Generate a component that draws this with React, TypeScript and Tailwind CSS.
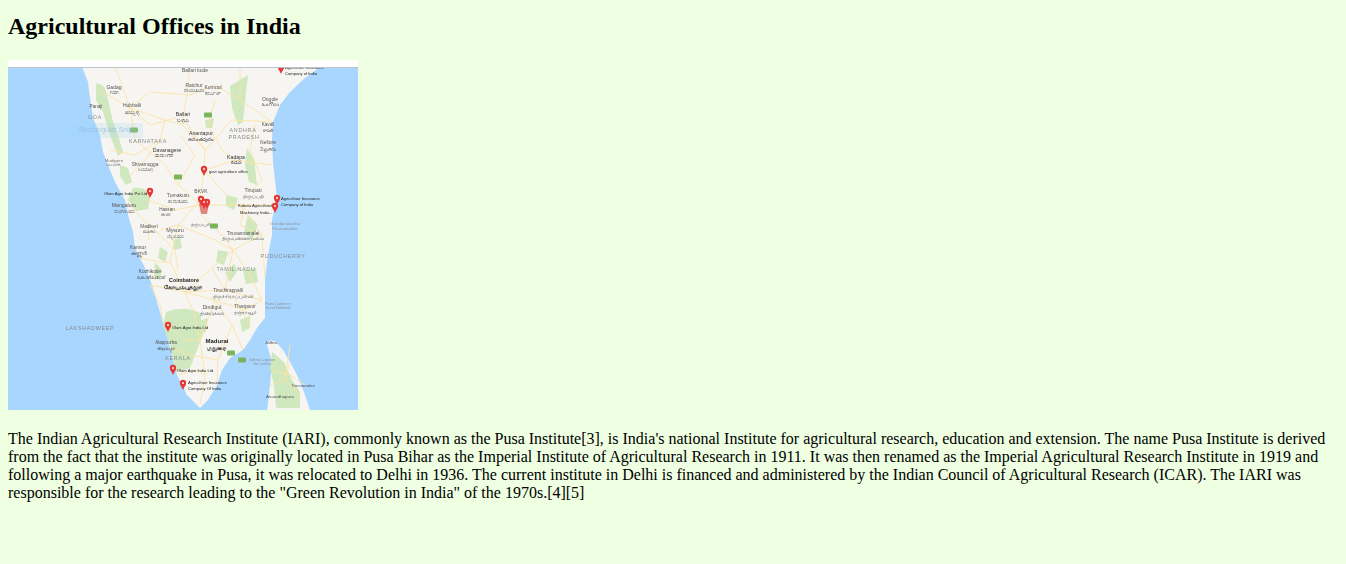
const roads = [
  "M115 67 L122 85 L130 108 L150 125 L176 118 L205 150 L204 170 L200 200 L178 225 L170 262 L185 292 L215 300 L232 325 L243 350",
  "M190 67 L187 95 L183 118 L205 150 L232 120 L272 122",
  "M130 108 L165 120 L183 125",
  "M205 170 L235 160 L272 165",
  "M204 170 L235 205 L275 205",
  "M200 205 L240 205 L262 235 L265 278",
  "M148 200 L175 210 L200 205",
  "M130 108 L135 140 L165 165 L178 185 L200 205",
  "M185 292 L150 285",
  "M185 292 L225 290 L262 300",
  "M225 290 L233 250 L262 235",
  "M215 300 L200 340 L205 375 L200 405",
  "M232 325 L218 360 L217 385",
  "M150 225 L175 250 L178 270",
  "M240 67 L240 100 L272 122",
  "M290 345 L285 380 L300 395",
  "M272 370 L290 375 L305 385",
  "M100 90 L130 108 L150 92 L190 95 L215 85 L240 100",
  "M165 120 L160 140 L145 160 L130 175",
  "M215 100 L208 125 L222 150 L235 160",
  "M255 125 L250 150 L262 180 L253 190",
  "M180 135 L195 155 L178 185",
  "M201 215 L222 235 L233 250 L212 268 L185 292",
  "M160 230 L178 225 L215 240 L233 250",
  "M245 205 L240 225 L262 235",
  "M150 285 L160 305 L163 322 L185 340 L200 340",
  "M185 292 L195 315 L200 340",
  "M215 300 L245 310 L262 300",
  "M233 296 L250 325",
  "M140 258 L160 262 L170 262",
  "M233 250 L250 275 L262 300",
  "M170 348 L190 355 L218 360",
  "M178 375 L195 370 L205 375",
  "M212 268 L225 290",
  "M130 205 L148 225 L149 240",
  "M110 150 L135 155 L160 140",
  "M270 385 L285 380 L290 362",
];

const forests = [
  "M96 84 Q104 82 107 95 L112 118 L118 135 L123 152 L118 156 L110 135 L103 112 L96 100 Z",
  "M120 165 L128 168 L132 182 L126 185 L120 176 Z",
  "M133 188 Q148 186 150 198 L148 209 L136 211 L128 200 Z",
  "M230 86 L248 75 L246 92 L243 122 L238 125 L232 108 Z",
  "M247 148 L254 160 L257 185 L249 182 L245 165 Z",
  "M166 312 Q185 305 200 313 L204 332 L190 368 L176 372 L170 345 L163 325 Z",
  "M160 247 L168 252 L165 262 L158 258 Z",
  "M218 250 L228 252 L224 265 L216 262 Z",
  "M248 215 L258 225 L252 240 L244 232 Z",
  "M225 273 L234 264 L238 270 L230 282 Z",
  "M243 270 L256 268 L258 282 L246 284 Z",
  "M272 352 L284 362 L292 380 L300 392 L300 408 L276 408 L274 385 L270 368 Z",
  "M205 120 L214 118 L212 128 L206 128 Z",
  "M173 240 L180 238 L182 248 L174 250 Z",
  "M196 322 L208 318 L206 332 L198 334 Z",
  "M226 195 L238 198 L234 210 L226 206 Z",
  "M155 262 L162 270 L160 280 L154 276 Z",
  "M240 320 L250 316 L250 328 L242 332 Z",
];

const labels: [number, number, string, number, string?][] = [
  [195, 71.5, "Ballari kude", 5],
  [114, 88.5, "Gadag", 5],
  [114, 93.5, "ಗದಗ", 5],
  [194, 86.5, "Raichur", 5],
  [194, 91.5, "ರಾಯಚೂರು", 5],
  [213, 88.5, "Kurnool", 5],
  [213, 94.5, "ಕರ್ನೂಲ್", 5],
  [132, 106.5, "Hubballi", 5],
  [132, 113.5, "ಹುಬ್ಬಳ್ಳಿ", 5.4, "#333"],
  [96, 107.5, "Panaji", 4.6],
  [183, 115.5, "Ballari", 5.2, "#333"],
  [183, 121.5, "ಬಳ್ಳಾರಿ", 5.2, "#333"],
  [270, 100.5, "Ongole", 5],
  [270, 105.5, "ఒంగోలు", 5],
  [268, 125.5, "Kavali", 4.6],
  [268, 131.5, "కావలి", 4.6],
  [268, 143.5, "Nellore", 5],
  [268, 150.5, "నెల్లూరు", 5],
  [201, 134.5, "Anantapur", 5.2, "#333"],
  [201, 140.5, "అనంతపురం", 5, "#333"],
  [236, 158.5, "Kadapa", 5.2, "#333"],
  [236, 163.5, "కడప", 5, "#333"],
  [114, 161.5, "Mudigere", 4.4, "#777"],
  [113, 165.5, "ಮೂಡಿಗೆರೆ", 4.4, "#777"],
  [145, 165.5, "Shivamogga", 4.8],
  [145, 170.5, "ಶಿವಮೊಗ್ಗ", 4.8],
  [167, 151.5, "Davanagere", 5.2, "#333"],
  [164, 156.5, "ದಾವಣಗೆರೆ", 5, "#333"],
  [124, 206.5, "Mangaluru", 5.2],
  [124, 212.5, "ಮಂಗಳೂರು", 5.2],
  [178, 196.5, "Tumakuru", 5],
  [178, 202.5, "ತುಮಕೂರು", 5.2],
  [167, 210.5, "Hassan", 4.6],
  [166, 215.5, "ಹಾಸನ", 4.6],
  [149, 227.5, "Madikeri", 4.6],
  [149, 232.5, "ಮಡಿಕೇರಿ", 4.6],
  [175, 231.5, "Mysuru", 5.4],
  [175, 237.5, "ಮೈಸೂರು", 5.4],
  [201, 192.5, "BKVK", 5],
  [201, 226, "தருமபுரி", 5],
  [253, 191.5, "Tirupati", 5.2],
  [253, 197.5, "திருப்பதி", 5],
  [285, 224.5, "Gandarvakottai", 4.4, "#8c97a0"],
  [285, 229.5, "Poonamallee", 4.4, "#8c97a0"],
  [243, 234.5, "Tiruvannamalai", 4.8],
  [243, 240, "திருவண்ணாமலை", 4.6],
  [138, 248.5, "Kannur", 5],
  [139, 254.5, "കണ്ണൂർ", 5.2],
  [150, 272.5, "Kozhikode", 4.8],
  [151, 278.5, "കോഴിക്കോട്", 4.8],
  [166, 343.5, "Alappuzha", 4.6],
  [166, 349.5, "ആലപ്പുഴ", 4.6],
  [212, 308.5, "Dindigul", 5.2],
  [212, 314.5, "திண்டுக்கல்", 5.2],
  [228, 291.5, "Tiruchirappalli", 4.8],
  [233, 297.5, "திருச்சிராப்பள்ளி", 5.2],
  [245, 307.5, "Thanjavur", 4.8],
  [245, 313.5, "தஞ்சாவூர்", 5.2],
  [278, 304.5, "Point Calimere", 4, "#8c97a0"],
  [278, 308.8, "Sand Hollondi", 4, "#8c97a0"],
  [271, 343.5, "Jaffna", 4.4],
  [262, 360.5, "Jaffna Lagoon", 4.2, "#8c97a0"],
  [262, 365, "Sri Lanka", 4.2, "#8c97a0"],
  [303, 386.5, "Trincomalee", 4.4],
  [280, 397.5, "Anuradhapura", 4.4],
];

const regionLabels: [number, number, string][] = [
  [148, 143, "KARNATAKA"],
  [243, 132, "ANDHRA"],
  [244, 139, "PRADESH"],
  [95, 119, "GOA"],
  [236, 271, "TAMIL NADU"],
  [283, 258, "PUDUCHERRY"],
  [90, 330, "LAKSHADWEEP"],
  [178, 360, "KERALA"],
];

const pinLabels: [number, number, string][] = [
  [104, 195, "Olam Agro India Pvt Ltd"],
  [209, 173, "govt agriculture office"],
  [281, 199.5, "Agriculture Insurance"],
  [281, 205.5, "Company of India"],
  [238, 206.5, "Kubota Agricultural"],
  [240, 213.5, "Machinery India..."],
  [285, 68.5, "Agriculture Insurance"],
  [285, 74.5, "Company of India"],
  [172, 328.5, "Olam Agro India Ltd"],
  [177, 371.5, "Olam Agro India Ltd"],
  [188, 383.5, "Agriculture Insurance"],
  [188, 389.5, "Company Of India"],
];

const cities: [number, number, string, number][] = [
  [184, 281.5, "Coimbatore", 5.4],
  [183, 289, "கோயம்புத்தூர்", 6.2],
  [217, 342.5, "Madurai", 6],
  [216, 350, "மதுரை", 6.2],
];

const pins = [
  [281, 68], [204, 170], [150, 192], [277, 199], [275, 207], [207, 203], [204, 203],
  [201, 200], [168, 326], [173, 369], [183, 384],
];

const shields = [
  [208, 115], [134, 130], [178, 177], [214, 226], [231, 353], [242, 360],
];

const MapImage = () => (
  <svg viewBox="8 60 350 350" className="block w-[350px] h-[350px]">
    <rect x="8" y="60" width="350" height="350" fill="#a8d6ff" />
    <g className="blur-[0.6px]">
      <path
        d="M82 67 L88 82 L90 98 L93 118 L100 135 L103 152 L110 170 L115 182 L125 200 L128 215 L133 232 L135 248 L140 258 L147 272 L152 285 L157 302 L163 322 L170 348 L177 375 L187 395 L200 408 L208 400 L217 385 L222 370 L230 358 L243 350 L250 340 L257 328 L265 318 L265 300 L265 278 L268 255 L272 235 L272 220 L275 205 L277 198 L275 180 L273 162 L272 140 L273 122 L280 105 L290 92 L305 78 L320 67 Z"
        fill="#f6f5f1"
      />
      <path
        d="M267 345 L270 340 L276 342 L283 350 L290 362 L297 375 L304 392 L310 410 L267 410 L269 395 L270 385 L272 362 Z"
        fill="#f6f5f1"
      />
      {forests.map((d, i) => (
        <path key={i} d={d} fill="#cfe8bd" />
      ))}
      {roads.map((d, i) => (
        <path key={i} d={d} fill="none" stroke="#fde3a4" strokeWidth="0.9" />
      ))}
      <g fontFamily="'Liberation Sans', 'Noto Sans', sans-serif" textAnchor="middle">
        {labels.map(([x, y, t, size, fill], i) => (
          <text key={i} x={x} y={y} fontSize={size} fill={fill ?? "#555"}>
            {t}
          </text>
        ))}
        {regionLabels.map(([x, y, t], i) => (
          <text key={i} x={x} y={y} fontSize="5.4" fill="#868b90" letterSpacing="0.7">
            {t}
          </text>
        ))}
        {cities.map(([x, y, t, size], i) => (
          <text key={i} x={x} y={y} fontSize={size} fontWeight="bold" fill="#222">
            {t}
          </text>
        ))}
      </g>
      <g fontFamily="'Liberation Sans', sans-serif" fontSize="4.1" fill="#222">
        {pinLabels.map(([x, y, t], i) => (
          <text key={i} x={x} y={y}>
            {t}
          </text>
        ))}
      </g>
      {shields.map(([x, y], i) => (
        <rect key={i} x={x - 4} y={y - 2.5} width="8" height="5" rx="1" fill="#7cb45c" />
      ))}
      <rect x="64" y="123" width="79" height="15" fill="#a0d0f5" opacity="0.2" />
      <text x="79" y="132" fontSize="7" fontFamily="'Liberation Sans', sans-serif" fill="#8fb9da" opacity="0.7">
        Rectangular Snip
      </text>
    </g>
    <g className="blur-[0.3px]">
      <path d="M199 204 L209 204 L207 214 L201 214 Z" fill="#d9534f" opacity="0.7" />
      {pins.map(([x, y], i) => (
        <g key={i}>
          <path
            d={`M${x} ${y + 6} C${x - 1} ${y + 3} ${x - 3.2} ${y + 1.5} ${x - 3.2} ${y - 1} A3.2 3.2 0 0 1 ${x + 3.2} ${y - 1} C${x + 3.2} ${y + 1.5} ${x + 1} ${y + 3} ${x} ${y + 6} Z`}
            fill="#e53935"
          />
          <circle cx={x} cy={y - 1} r="1.1" fill="#fbe9e7" />
        </g>
      ))}
    </g>
    <rect x="8" y="60" width="350" height="7" fill="#ffffff" />
    <rect x="8" y="67" width="350" height="1" fill="#b9c3cc" />
  </svg>
);

export default function App() {
  return (
    <div className="min-h-screen bg-[#eeffe2] px-2 pt-3 text-black font-['Liberation_Serif',serif]">
      <h2 className="text-2xl leading-7 font-bold mb-5">Agricultural Offices in India</h2>
      <MapImage />
      <p className="mt-5 text-base leading-[18px]">
        The Indian Agricultural Research Institute (IARI), commonly known as the Pusa Institute[3], is India's national
        Institute for agricultural research, education and extension. The name Pusa Institute is derived from the fact
        that the institute was originally located in Pusa Bihar as the Imperial Institute of Agricultural Research in
        1911. It was then renamed as the Imperial Agricultural Research Institute in 1919 and following a major
        earthquake in Pusa, it was relocated to Delhi in 1936. The current institute in Delhi is financed and
        administered by the Indian Council of Agricultural Research (ICAR). The IARI was responsible for the research
        leading to the "Green Revolution in India" of the 1970s.[4][5]
      </p>
    </div>
  );
}
